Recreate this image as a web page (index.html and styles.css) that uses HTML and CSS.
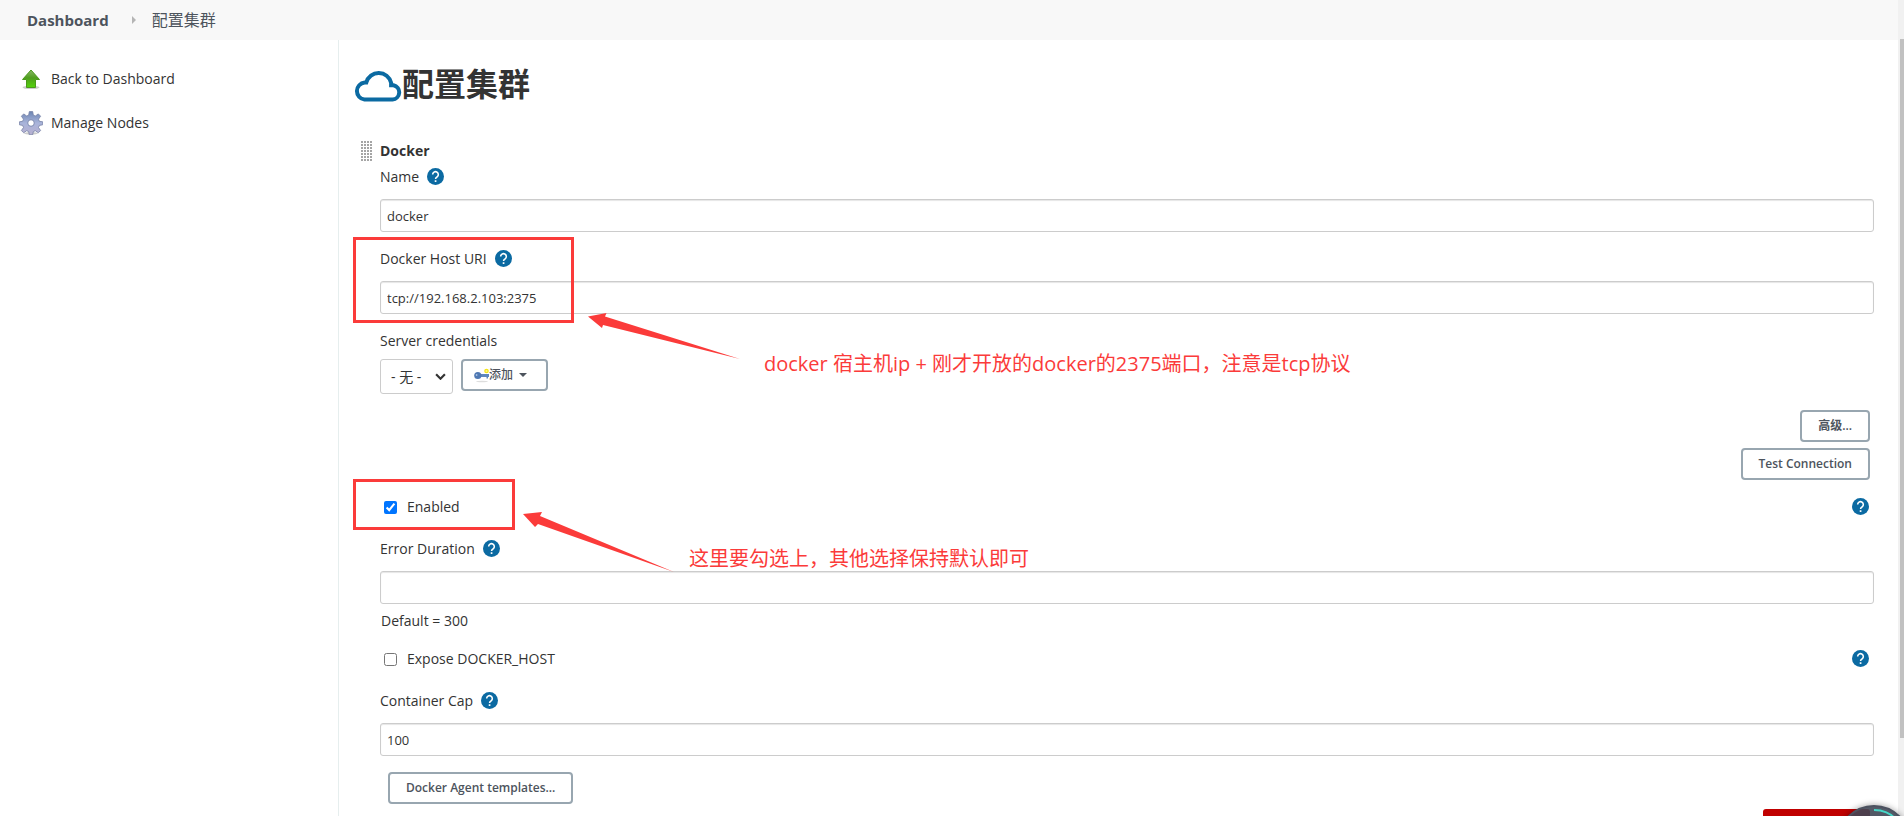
FILE: index.html
```html
<!DOCTYPE html>
<html lang="zh-CN">
<head>
<meta charset="utf-8">
<title>配置集群</title>
<link rel="stylesheet" href="styles.css">
</head>
<body>
<svg class="defs" aria-hidden="true">
  <symbol id="help" viewBox="0 0 24 24">
    <circle cx="12" cy="12" r="12" fill="#0b6aa2"/>
    <path d="M8 9.200a4 4 0 1 1 6.400 3.200c-1.500 1.100-2.300 1.600-2.300 3.300" fill="none" stroke="#fff" stroke-width="2.200"/>
    <rect x="10.900" y="17.300" width="2.400" height="2.400" fill="#fff"/>
  </symbol>
</svg>
<div class="page">
  <div class="view">
    <nav class="crumbs">
      <a href="#" class="crumb-home">Dashboard</a>
      <span class="crumb-arrow"></span>
      <a href="#" class="crumb-here">配置集群</a>
    </nav>
    <div class="body">
      <aside class="side">
        <a href="#" class="task">
          <svg class="task-icon" viewBox="0 0 24 24">
            <defs><linearGradient id="green" x1="0" y1="0" x2="0" y2="1"><stop offset="0" stop-color="#8ab868"/><stop offset=".45" stop-color="#4f9e1e"/><stop offset="1" stop-color="#55d40c"/></linearGradient></defs>
            <ellipse cx="12" cy="20.500" rx="8.500" ry="1.600" fill="#ccc"/>
            <path d="M12 3 3.500 12.500H7.500V20.500H16.500V12.500H20.500z" fill="url(#green)" stroke="#4b9a1c" stroke-width="1"/>
          </svg>
          Back to Dashboard
        </a>
        <a href="#" class="task">
          <svg class="task-icon" viewBox="0 0 24 24">
            <defs><linearGradient id="steel" x1="0" y1="0" x2="0" y2="1"><stop offset="0" stop-color="#6d86b4"/><stop offset=".5" stop-color="#a9b4da"/><stop offset="1" stop-color="#b8b0d0"/></linearGradient></defs>
            <ellipse cx="12" cy="22.300" rx="7" ry="1.300" fill="#ccc"/>
            <g fill="url(#steel)" stroke="#7681a6" stroke-width=".8">
              <path d="M10.300.6h3.400l.6 3.500 2 .9 3-2.100 2.300 2.300-2.100 3 .9 2.100 3.300.5v3l-3.300.6-.9 2.100 2.100 3-2.300 2.300-3-2.100-2 .9-.6 3.200h-3.400l-.6-3.200-2-.9-3 2.100-2.300-2.300 2.100-3-.9-2.100L.400 13.800v-3l3.200-.5.9-2.100-2.100-3 2.300-2.300 3 2.100 2-.9z"/>
            </g>
            <circle cx="12" cy="12" r="3.300" fill="#fff" stroke="#7c89b0" stroke-width="1"/>
          </svg>
          Manage Nodes
        </a>
      </aside>
      <main class="main">
        <h1 class="title">
          <svg class="cloud" viewBox="0 0 48 31">
            <path d="M10.500 28.600h28a7.300 7.300 0 0 0 1-14.400h-2.400v-2.400A12.800 12.800 0 0 0 12.300 11.500h-1.600a8.600 8.600 0 0 0-.2 17.100z" fill="none" stroke="#0b6aa2" stroke-width="4"/>
          </svg>配置集群
        </h1>
        <form class="form">
          <div class="section"><span class="grip"></span>Docker</div>

          <div class="label-row">
            <label for="name">Name</label>
            <a href="#" class="help" aria-label="Help"><svg><use href="#help"/></svg></a>
          </div>
          <input class="text" id="name" type="text" value="docker">

          <div class="label-row">
            <label for="uri">Docker Host URI</label>
            <a href="#" class="help" aria-label="Help"><svg><use href="#help"/></svg></a>
          </div>
          <input class="text" id="uri" type="text" value="tcp://192.168.2.103:2375">

          <div class="label-row"><label for="cred">Server credentials</label></div>
          <div class="cred">
            <div class="select-wrap">
              <select id="cred" class="select"><option>- 无 -</option></select>
              <svg class="chevron" viewBox="0 0 10 6"><path d="m1 1 4 4 4-4" fill="none" stroke="#333" stroke-width="2"/></svg>
            </div>
            <button type="button" class="btn btn-add">
              <svg class="key" viewBox="0 0 15 15">
                <ellipse cx="8" cy="13.500" rx="6" ry=".8" fill="#ddd"/>
                <path d="M5 6h10v3h-1v1.500h-1.500V9H5z" fill="#5f87bd"/>
                <circle cx="3.800" cy="7.500" r="3.600" fill="#4f78b3"/>
                <circle cx="2.600" cy="7" r=".9" fill="#a9c2e2"/>
                <circle cx="12.500" cy="3" r="1.700" fill="#fff68a" stroke="#f4e51b" stroke-width="1.200"/>
              </svg>添加<span class="caret"></span>
            </button>
          </div>

          <div class="actions">
            <button type="button" class="btn">高级...</button>
            <button type="button" class="btn">Test Connection</button>
          </div>

          <div class="check-row">
            <input type="checkbox" id="enabled" class="check" checked>
            <label for="enabled">Enabled</label>
            <a href="#" class="help help-end" aria-label="Help"><svg><use href="#help"/></svg></a>
          </div>

          <div class="label-row">
            <label for="err">Error Duration</label>
            <a href="#" class="help" aria-label="Help"><svg><use href="#help"/></svg></a>
          </div>
          <input class="text" id="err" type="text">
          <div class="hint">Default = 300</div>

          <div class="check-row">
            <input type="checkbox" id="expose" class="check">
            <label for="expose">Expose DOCKER_HOST</label>
            <a href="#" class="help help-end" aria-label="Help"><svg><use href="#help"/></svg></a>
          </div>

          <div class="label-row">
            <label for="cap">Container Cap</label>
            <a href="#" class="help" aria-label="Help"><svg><use href="#help"/></svg></a>
          </div>
          <input class="text" id="cap" type="text" value="100">
          <button type="button" class="btn btn-templates">Docker Agent templates...</button>
        </form>

        <div class="mark mark-uri"></div>
        <div class="mark mark-enabled"></div>
        <svg class="arrow arrow-uri" viewBox="0 0 152 46"><path d="M0 3.500 18.500 0 17 3.500 152 46 15 12 14 15z" fill="#fb3b3a"/></svg>
        <svg class="arrow arrow-enabled" viewBox="0 0 151 60"><path d="M0 2 19 0 17 4 151 60 15 12 12 15z" fill="#fb3b3a"/></svg>
        <p class="note note-uri">docker 宿主机ip + 刚才开放的docker的2375端口，注意是tcp协议</p>
        <p class="note note-enabled">这里要勾选上，其他选择保持默认即可</p>
      </main>
    </div>
    <div class="red-bar"></div>
  </div>
  <div class="scroll"><div class="thumb"></div></div>
  <svg class="dial" viewBox="0 0 76 76">
    <circle cx="38" cy="38" r="36" fill="#434a59" fill-opacity=".85" stroke="#4c5260" stroke-width="2"/>
    <path d="M38 6a32 32 0 0 1 32 32" fill="none" stroke="#46d8c8" stroke-width="2"/>
  </svg>
</div>
</body>
</html>
```

FILE: styles.css
```css
* { box-sizing: border-box; }

body {
  margin: 0;
  font-family: "Open Sans", "Noto Sans", "Noto Sans CJK SC", sans-serif;
  font-size: 14px;
  line-height: 20px;
  color: #333;
  background: #fff;
}

a { color: inherit; text-decoration: none; }
.defs { display: none; }

.page {
  position: relative;
  display: flex;
  height: 100vh;
  overflow: hidden;
}

.view {
  position: relative;
  flex: 1;
  display: flex;
  flex-direction: column;
}

.crumbs {
  display: flex;
  align-items: center;
  flex: none;
  height: 40px;
  padding-left: 27px;
  background: #f8f8f8;
  color: #4d545d;
  font-size: 16px;
}
.crumb-home { font-size: 15px; font-weight: 700; }
.crumb-arrow {
  margin: 0 16px 0 23px;
  border: 4px solid transparent;
  border-left-color: #b5b5b5;
  border-right-width: 0;
}

.body { flex: 1; display: flex; }

.side {
  flex: none;
  display: flex;
  flex-direction: column;
  gap: 20px;
  width: 339px;
  padding: 27px 19px;
  border-right: 1px solid #e6eeee;
}
.task {
  display: flex;
  align-items: center;
  gap: 8px;
  font-weight: 500;
}
.task-icon { width: 24px; height: 24px; }

.main {
  position: relative;
  flex: 1;
  padding: 20px 24px 0 15px;
}

.title {
  display: flex;
  align-items: center;
  height: 48px;
  margin: 0 0 33px;
  font-size: 32px;
  line-height: 48px;
  font-weight: 700;
}
.cloud { width: 48px; height: 31px; margin-top: 4px; }

.form {
  display: flex;
  flex-direction: column;
  padding-left: 26px;
}

.section {
  display: flex;
  align-items: center;
  height: 20px;
  margin-bottom: 1px;
  margin-left: -19px;
  font-weight: 700;
}
.grip {
  width: 12px;
  height: 20px;
  margin-right: 7px;
  background: radial-gradient(circle at 1px 1px, #a5a5a5 1px, transparent 1px) 0 0 / 3px 3px;
}

.label-row, .check-row {
  display: flex;
  align-items: center;
  height: 30px;
  font-weight: 500;
}
.label-row { gap: 8px; margin-bottom: 7px; }
.text + .label-row, .check-row + .label-row { margin-top: 12px; }

.help { padding-bottom: 2px; }
.help svg { display: block; width: 17px; height: 17px; }
.help-end { margin: 0 5px 0 auto; }

.text {
  width: 100%;
  height: 33px;
  padding: 0 6px;
  border: 1px solid #ccc;
  border-radius: 3px;
  box-shadow: inset 0 1px 1px rgba(0, 0, 0, .1);
  background: #fff;
  color: #333;
  font: inherit;
  font-size: 13px;
}

.cred {
  display: flex;
  align-items: flex-start;
  gap: 8px;
  margin-top: -4px;
}
.select-wrap { position: relative; }
.select {
  appearance: none;
  display: block;
  width: 73px;
  height: 35px;
  padding: 0 10px;
  border: 1px solid #ccc;
  border-radius: 3px;
  background: #fff;
  color: #333;
  font: inherit;
}
.chevron {
  position: absolute;
  right: 7px;
  top: 14px;
  width: 11px;
  height: 7px;
  pointer-events: none;
}

.btn {
  height: 32px;
  padding: 0 16px;
  border: 2px solid #98a6b0;
  border-radius: 4px;
  background: #fff;
  color: #4d545d;
  font: inherit;
  font-size: 12px;
  font-weight: 600;
}
.btn-add {
  display: flex;
  align-items: center;
  width: 87px;
  padding: 0 11px;
  font-weight: 500;
}
.key { width: 15px; height: 15px; }
.caret {
  margin-left: 6px;
  border: 4px solid transparent;
  border-top-color: #4d545d;
  border-bottom-width: 0;
}

.actions {
  display: flex;
  flex-direction: column;
  align-items: flex-end;
  gap: 6px;
  margin: 16px 4px 12px 0;
}

.check { width: 13px; height: 13px; margin: 0 10px 0 4px; }

.hint { margin: 7px 1px 13px; }

.btn-templates { align-self: flex-start; margin: 16px 8px; }

.mark { position: absolute; border: 3px solid #fb3b3a; pointer-events: none; }
.mark-uri { left: 14px; top: 197px; width: 221px; height: 86px; }
.mark-enabled { left: 14px; top: 439px; width: 162px; height: 51px; }

.arrow { position: absolute; }
.arrow-uri { left: 249px; top: 273px; width: 152px; height: 46px; }
.arrow-enabled { left: 184px; top: 472px; width: 151px; height: 60px; }

.note {
  position: absolute;
  margin: 0;
  color: #fb3b3a;
  font-size: 20px;
  line-height: 28px;
  white-space: nowrap;
}
.note-uri { left: 425px; top: 310px; }
.note-enabled { left: 350px; top: 505px; }

.red-bar {
  position: absolute;
  right: 28px;
  bottom: 0;
  width: 107px;
  height: 7px;
  border-radius: 3px 3px 0 0;
  background: #c00000;
}

.scroll {
  flex: none;
  width: 6px;
  padding: 39px 0 0 2px;
  background: #f1f1f1;
}
.thumb { height: 90%; background: #c1c1c1; }

.dial {
  position: absolute;
  right: -8px;
  bottom: -64px;
  width: 76px;
  height: 76px;
  filter: drop-shadow(0 0 3px rgba(0, 0, 0, .4));
}
```
